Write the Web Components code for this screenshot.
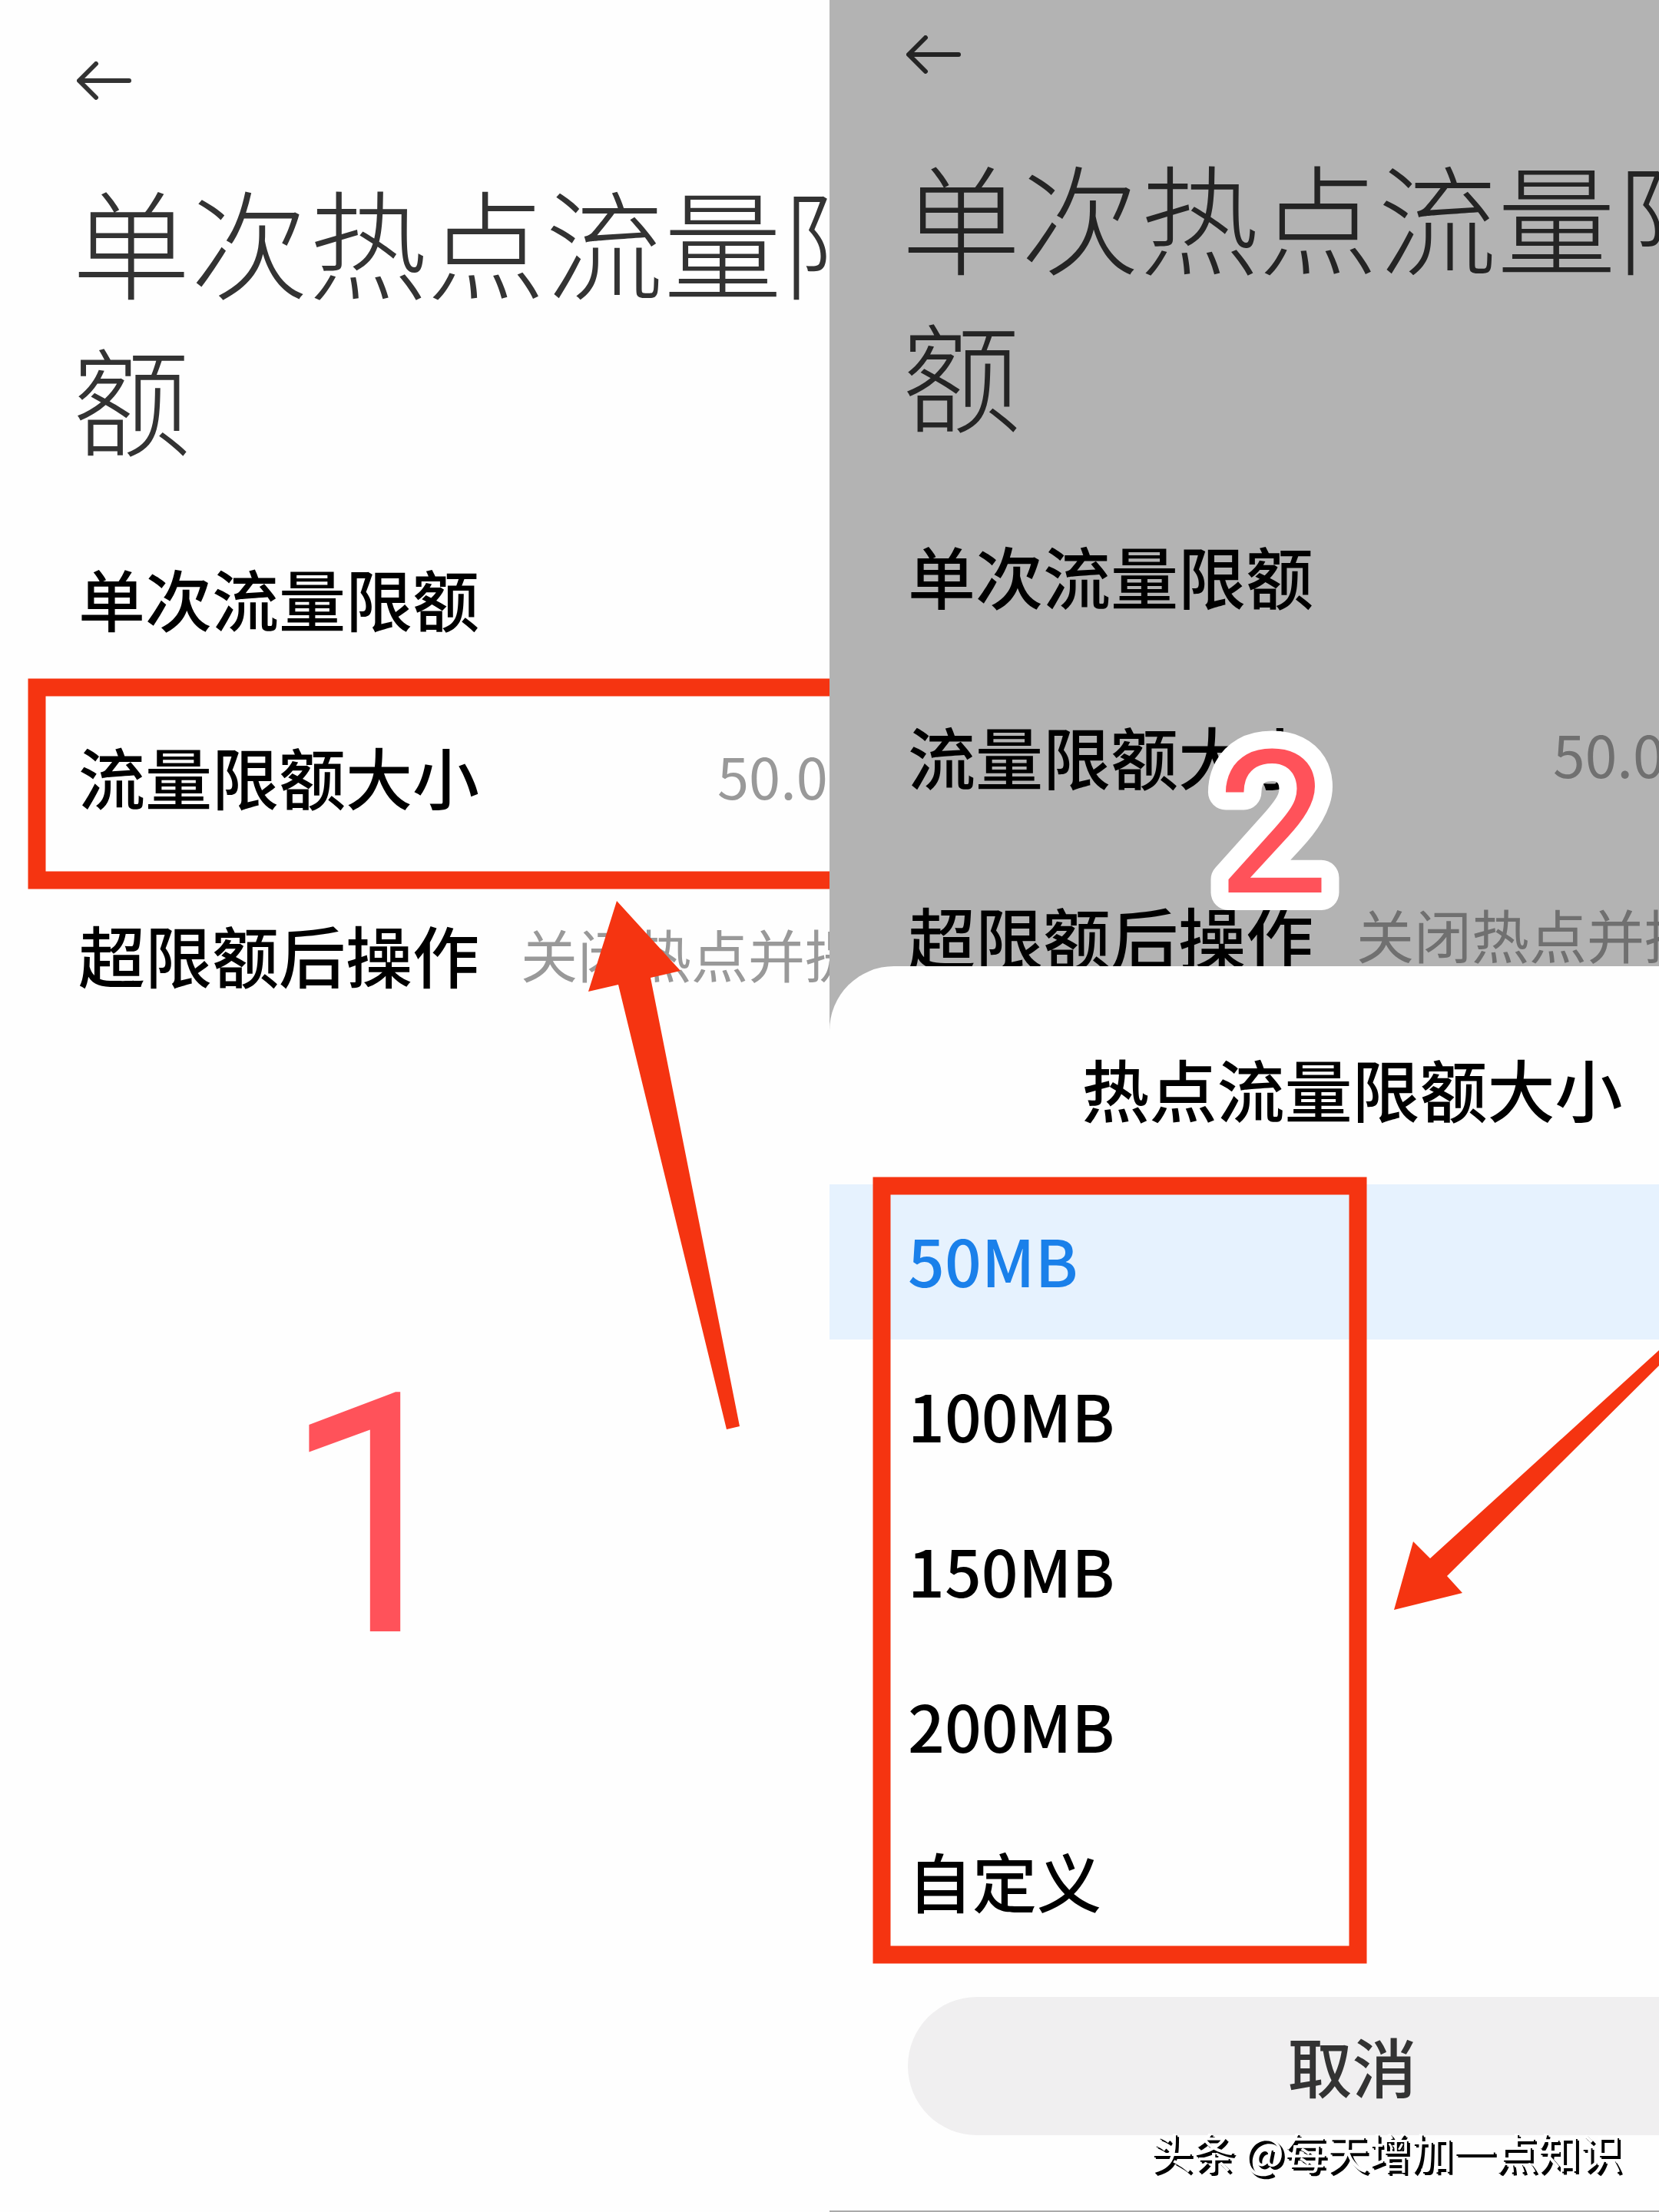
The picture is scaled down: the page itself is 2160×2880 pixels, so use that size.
<!DOCTYPE html>
<html lang="zh-CN">
<head>
    <meta charset="UTF-8">
    <meta name="viewport" content="width=device-width, initial-scale=1.0">
    <title>单次热点流量限额</title>
    <style>
        body{
            margin: 0;
            font-family: "Noto Sans CJK SC", "Noto Sans", sans-serif;
            background: #fefefe;
        }
    </style>
</head>
<body>
    <tutorial-page>
        <phone-screen heading="单次热点流量限额">
            <setting-row>单次流量限额</setting-row>
            <setting-row style="--value-start: 832px">流量限额大小<span slot="value">50.0</span></setting-row>
            <setting-row style="--value-start: 576px">超限额后操作<span slot="value">关闭热点并提</span></setting-row>
            <step-marks step="1" slot="marks"></step-marks>
        </phone-screen>
        <phone-screen heading="单次热点流量限额" dimmed>
            <setting-row>单次流量限额</setting-row>
            <setting-row style="--value-start: 840px">流量限额大小<span slot="value">50.0</span></setting-row>
            <setting-row style="--value-start: 584px">超限额后操作<span slot="value">关闭热点并提</span></setting-row>
            <bottom-sheet heading="热点流量限额大小" slot="sheet">
                <sheet-option selected>50MB</sheet-option>
                <sheet-option>100MB</sheet-option>
                <sheet-option>150MB</sheet-option>
                <sheet-option>200MB</sheet-option>
                <sheet-option>自定义</sheet-option>
            </bottom-sheet>
            <step-marks step="2" slot="marks"></step-marks>
        </phone-screen>
        <span slot="credit">头条 @每天增加一点知识</span>
    </tutorial-page>

    <script>
        function template(html){
            const t = document.createElement('template')
            t.innerHTML = html
            return t
        }

        // every element clones its class's template into an open root
        class BaseElement extends HTMLElement{
            constructor(){
                super()
                this.attachShadow({mode:'open'});
                this.shadowRoot.append(this.constructor.template.content.cloneNode(true))
                const heading = this.shadowRoot.querySelector('.heading')
                if(heading) heading.textContent = this.getAttribute('heading')
            }
        }

        class TutorialPage extends BaseElement{}
        TutorialPage.template = template(`
<style>
:host {
display: grid;
grid-template-columns: 1fr 1fr;
position: relative;
min-height: 100vh;
overflow: hidden;
}
/* white letters with a hard black shadow */
.credit {
position: absolute;
right: 48px;
bottom: 40px;
font-size: 55px;
line-height: 80px;
color: #fff;
text-shadow: 2px 2px 0 #000, 4px 4px 0 #000;
z-index: 2;
}
</style>
<slot></slot>
<div class="credit"><slot name="credit"></slot></div>
`);

        class PhoneScreen extends BaseElement{}
        PhoneScreen.template = template(`
<style>
:host {
display: block;
position: relative;
overflow: hidden;
color: #333;
--pad-top: 80px;
--title-size: 154px;
--title-line: 204px;
--label-size: 87px;
--value-size: 74px;
--value-color: #999;
--row-height: 232px;
}
:host([dimmed]) {
background: #b3b3b3;
color: #242424;
--pad-top: 46px;
--title-size: 155px;
--title-line: 205px;
--label-size: 88px;
--value-size: 75px;
--value-color: #707070;
--row-height: 235px;
}
/* the phone is wider than its column, the rest is cut off */
.screen {
width: 126%;
box-sizing: border-box;
padding: var(--pad-top) 100px 0;
}
.back {
display: block;
padding: 0;
border: 0;
background: none;
color: inherit;
}
.back svg {
display: block;
}
h1 {
margin: 80px 0 44px -6px;
font-size: var(--title-size);
line-height: var(--title-line);
font-weight: 300;
}
</style>
<div class="screen">
<button class="back" type="button" aria-label="返回">
<svg width="72" height="50" viewBox="0 0 72 50" fill="none" stroke="currentColor" stroke-width="6" stroke-linecap="round" stroke-linejoin="round">
<path d="M25 3 L3 25 L25 47"/><path d="M4 25 H68"/>
</svg>
</button>
<h1 class="heading"></h1>
<slot></slot>
</div>
<slot name="sheet"></slot>
<slot name="marks"></slot>
`);

        class SettingRow extends BaseElement{}
        SettingRow.template = template(`
<style>
:host {
display: block;
}
button {
display: grid;
grid-template-columns: var(--value-start, 1fr) auto;
align-items: center;
width: 100%;
height: var(--row-height);
padding: 0 0 0 2px;
border: 0;
background: none;
font: inherit;
font-size: var(--label-size);
font-weight: 500;
text-align: left;
white-space: nowrap;
color: #000;
}
.value {
padding-bottom: 4px;
font-size: var(--value-size);
font-weight: 400;
color: var(--value-color);
}
</style>
<button type="button">
<span><slot></slot></span>
<span class="value"><slot name="value"></slot></span>
</button>
`);

        class BottomSheet extends BaseElement{}
        BottomSheet.template = template(`
<style>
:host {
position: absolute;
left: 0;
bottom: 0;
width: 126%;
box-sizing: border-box;
padding-bottom: 98px;
border-bottom: 2px solid #aaa;
border-radius: 84px 84px 0 0;
background: #fefefe;
}
h2 {
margin: 0;
padding: 94px 0 62px;
font-size: 88px;
line-height: 128px;
font-weight: 500;
text-align: center;
color: #000;
}
.cancel {
display: block;
width: calc(100% - 204px);
height: 180px;
margin: 48px auto 0;
padding: 0 0 4px;
border: 0;
border-radius: 90px;
background: #f0eff0;
font: inherit;
font-size: 84px;
font-weight: 500;
color: #333;
}
</style>
<h2 class="heading"></h2>
<slot></slot>
<button class="cancel" type="button">取消</button>
`);

        class SheetOption extends BaseElement{}
        SheetOption.template = template(`
<style>
:host {
display: block;
color: #000;
}
:host([selected]) {
background: #e6f2fe;
color: #1a80ea;
}
button {
display: block;
width: 100%;
height: 202px;
padding: 0 102px 8px;
border: 0;
background: none;
font: inherit;
font-size: 84px;
font-weight: 500;
text-align: left;
color: inherit;
}
</style>
<button type="button"><slot></slot></button>
`);

        // red frame, arrow and step number drawn over a screen
        class StepMarks extends HTMLElement{
            constructor(){
                super()
                this.attachShadow({mode:'open'});
                this.shadowRoot.append(StepMarks.template.content.cloneNode(true))
                this.svg = this.shadowRoot.querySelector('svg')
                this.svg.innerHTML = StepMarks.steps[this.getAttribute('step')]
            }
        }
        StepMarks.template = template(`
<style>
:host {
position: absolute;
inset: 0;
pointer-events: none;
}
svg {
display: block;
width: 100%;
}
.frame {
fill: none;
stroke: #f53411;
stroke-width: 23;
}
.arrow {
fill: #f53411;
}
text {
font-family: Roboto, sans-serif;
fill: #ff525a;
}
.outlined {
stroke: #fff;
stroke-width: 46;
stroke-linejoin: round;
paint-order: stroke;
}
</style>
<svg viewBox="0 0 1080 2880"></svg>
`);
        StepMarks.steps = {
            1: `
<path class="frame" d="M1100 895 H48 V1146 H1100"/>
<path class="arrow" d="M803 1173 L886 1264 L847 1273 L963 1857 L946 1861 L805 1282 L766 1291 Z"/>
<text x="366" y="2124" font-size="436">1</text>
`,
            2: `
<rect class="frame" x="68" y="1544" width="620" height="1001"/>
<path class="arrow" d="M735 2096 L760 2007 L782 2029 L1080 1758 V1778 L804 2052 L824 2074 Z"/>
<text class="outlined" x="504" y="1162" font-size="260">2</text>
`
        }

        customElements.define("setting-row", SettingRow);
        customElements.define("sheet-option", SheetOption);
        customElements.define("bottom-sheet", BottomSheet);
        customElements.define("step-marks", StepMarks);
        customElements.define("phone-screen", PhoneScreen);
        customElements.define("tutorial-page", TutorialPage);
    </script>
</body>
</html>
